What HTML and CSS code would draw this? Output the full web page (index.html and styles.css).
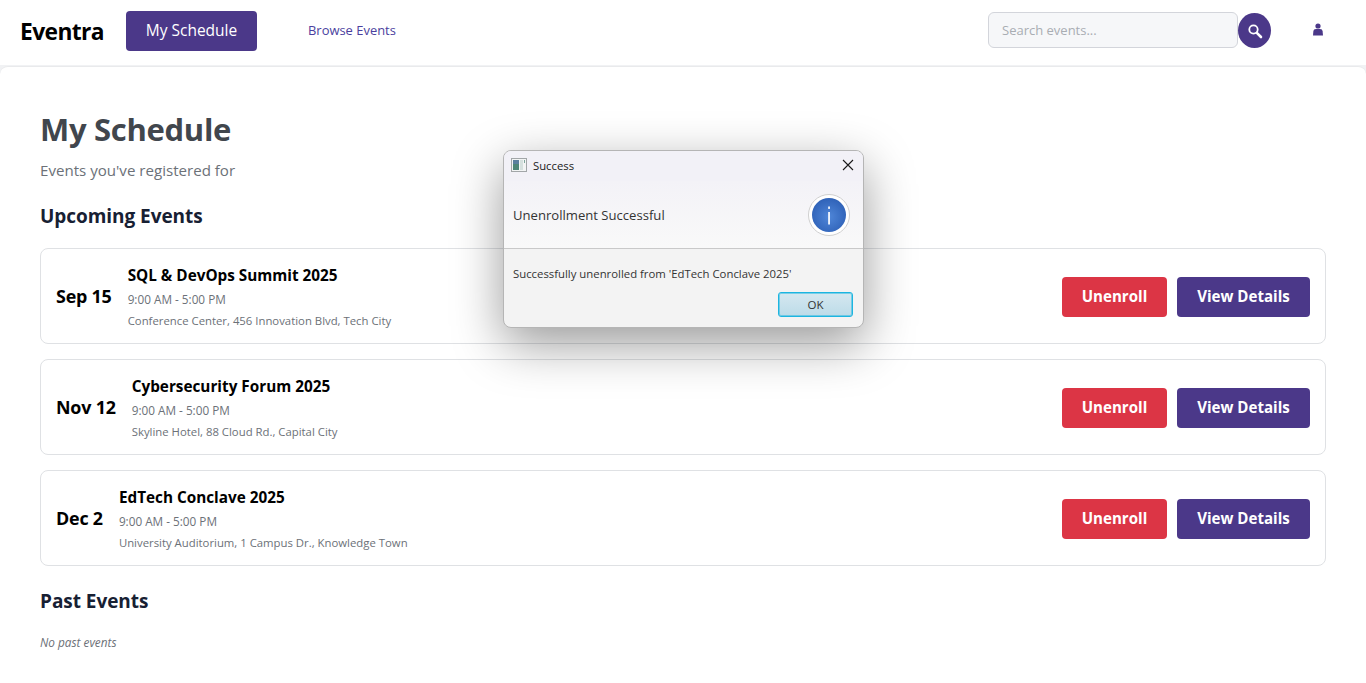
FILE: index.html
```html
<!DOCTYPE html>
<html lang="en">

<head>
    <meta charset="UTF-8">
    <title>Eventra - My Schedule</title>
    <link rel="stylesheet" href="styles.css">
</head>

<body>
    <header class="navbar">
        <span class="logo">Eventra</span>
        <a class="nav-active" href="#">My Schedule</a>
        <a class="nav-link" href="#">Browse Events</a>
        <div class="search">
            <div class="search-input">Search events...</div>
            <button class="search-btn" aria-label="Search">
                <svg width="16" height="16" viewBox="0 0 16 16">
                    <circle cx="6.5" cy="6.5" r="4.2" fill="none" stroke="#fff" stroke-width="1.8" />
                    <path d="M9.8 9.8 L14 14" stroke="#fff" stroke-width="2.6" stroke-linecap="round" />
                </svg>
            </button>
        </div>
        <div class="profile">
            <svg width="12" height="14" viewBox="0 0 12 14">
                <circle cx="6" cy="3" r="2.6" fill="#4b3889" />
                <path d="M1 12.5 L1.4 8 Q1.6 6 4 6 L8 6 Q10.4 6 10.6 8 L11 12.5 Z" fill="#4b3889" />
            </svg>
        </div>
    </header>

    <main class="content">
        <h1>My Schedule</h1>
        <p class="subtitle">Events you've registered for</p>

        <h2>Upcoming Events</h2>
        <div class="event-list">
            <div class="event-card">
                <span class="event-date">Sep 15</span>
                <div class="event-info">
                    <span class="event-title">SQL &amp; DevOps Summit 2025</span>
                    <span class="event-time">9:00 AM - 5:00 PM</span>
                    <span class="event-place">Conference Center, 456 Innovation Blvd, Tech City</span>
                </div>
                <div class="event-actions">
                    <a class="btn btn-red" href="#">Unenroll</a>
                    <a class="btn btn-purple" href="#">View Details</a>
                </div>
            </div>
            <div class="event-card">
                <span class="event-date">Nov 12</span>
                <div class="event-info">
                    <span class="event-title">Cybersecurity Forum 2025</span>
                    <span class="event-time">9:00 AM - 5:00 PM</span>
                    <span class="event-place">Skyline Hotel, 88 Cloud Rd., Capital City</span>
                </div>
                <div class="event-actions">
                    <a class="btn btn-red" href="#">Unenroll</a>
                    <a class="btn btn-purple" href="#">View Details</a>
                </div>
            </div>
            <div class="event-card">
                <span class="event-date">Dec 2</span>
                <div class="event-info">
                    <span class="event-title">EdTech Conclave 2025</span>
                    <span class="event-time">9:00 AM - 5:00 PM</span>
                    <span class="event-place">University Auditorium, 1 Campus Dr., Knowledge Town</span>
                </div>
                <div class="event-actions">
                    <a class="btn btn-red" href="#">Unenroll</a>
                    <a class="btn btn-purple" href="#">View Details</a>
                </div>
            </div>
        </div>

        <h2 class="past-title">Past Events</h2>
        <p class="no-events">No past events</p>
    </main>

    <div class="dialog">
        <div class="dialog-titlebar">
            <svg class="dialog-appicon" width="16" height="14" viewBox="0 0 16 14">
                <rect x="0.5" y="0.5" width="15" height="13" fill="#f2f4f4" stroke="#a2a6a8" />
                <rect x="2" y="2" width="6" height="10" fill="#4d8577" />
                <rect x="2" y="2" width="6" height="4" fill="#5a7f9e" />
                <rect x="9" y="2" width="3" height="10" fill="#d5e0de" />
                <rect x="13" y="2" width="1" height="3" fill="#7fa59b" />
            </svg>
            <span class="dialog-title">Success</span>
            <svg class="dialog-close" width="12" height="12" viewBox="0 0 12 12">
                <path d="M1 1 L11 11 M11 1 L1 11" stroke="#1a1a1a" stroke-width="1.1" />
            </svg>
        </div>
        <div class="dialog-header">
            <span>Unenrollment Successful</span>
            <div class="info-icon">
                <svg width="42" height="42" viewBox="0 0 42 42">
                    <defs>
                        <radialGradient id="infoFill" cx="50%" cy="55%" r="55%">
                            <stop offset="0%" stop-color="#4f86d8" />
                            <stop offset="100%" stop-color="#2f62b8" />
                        </radialGradient>
                    </defs>
                    <circle cx="21" cy="21" r="20.5" fill="#fff" stroke="#cfcfcf" />
                    <circle cx="21" cy="21" r="17" fill="url(#infoFill)" />
                    <rect x="20.2" y="18" width="1.7" height="12.5" fill="#fff" />
                    <rect x="20.2" y="12.5" width="1.7" height="2.4" fill="#fff" />
                </svg>
            </div>
        </div>
        <div class="dialog-body">
            <p>Successfully unenrolled from 'EdTech Conclave 2025'</p>
            <div class="dialog-buttons">
                <button class="dialog-ok">OK</button>
            </div>
        </div>
    </div>
</body>

</html>
```
FILE: styles.css
```css
* {
    box-sizing: border-box;
    margin: 0;
    padding: 0;
    font-family: "Open Sans", "Noto Sans", Arial, sans-serif;
}

body {
    width: 1366px;
    height: 683px;
    overflow: hidden;
    position: relative;
    background-color: #f1f2f4;
}

a {
    text-decoration: none;
}

.navbar {
    height: 65px;
    background-color: white;
    display: flex;
    align-items: center;
    padding: 0 20px 3px;
}

.logo {
    font-size: 22.8px;
    font-weight: 700;
    color: black;
    letter-spacing: -.6px;
    width: 106px;
}

.nav-active {
    width: 131px;
    height: 40px;
    line-height: 38px;
    text-align: center;
    background-color: #4b3889;
    color: white;
    border-radius: 4px;
    font-size: 15.5px;
}

.nav-link {
    margin-left: 51px;
    margin-top: -3px;
    color: #4b3f9e;
    font-size: 12.95px;
}

.search {
    margin-left: auto;
    margin-top: -2px;
    display: flex;
    align-items: center;
}

.search-input {
    width: 250px;
    height: 36px;
    line-height: 35px;
    padding-left: 13px;
    background-color: #f6f7f9;
    border: 1px solid #d3d5db;
    border-radius: 6px;
    color: #a9adb3;
    font-size: 13px;
}

.search-btn {
    width: 33px;
    height: 35px;
    margin-top: 1px;
    border: none;
    border-radius: 50%;
    background-color: #4b3889;
    display: flex;
    align-items: center;
    justify-content: center;
}

.profile {
    width: 12px;
    margin-left: 41px;
    margin-right: 22px;
    margin-top: -3px;
    display: flex;
}

.content {
    height: 618px;
    margin-top: 1px;
    padding: 40px 40px 0;
    background-color: white;
    border-radius: 8px 8px 0 0;
    border-top: 1px solid #e9eaec;
}

h1 {
    font-size: 31px;
    font-weight: 700;
    line-height: 44px;
    color: #41464d;
    letter-spacing: -.3px;
}

.subtitle {
    margin-top: 7px;
    font-size: 15.1px;
    line-height: 24px;
    color: #6c7178;
}

h2 {
    margin-top: 21px;
    font-size: 19px;
    font-weight: 700;
    line-height: 26px;
    color: #172033;
    letter-spacing: -.05px;
}

.event-list {
    margin-top: 19px;
    display: flex;
    flex-direction: column;
    gap: 15px;
}

.event-card {
    height: 96px;
    display: flex;
    align-items: center;
    gap: 16px;
    padding: 0 15px;
    border: 1px solid #dfe1e4;
    border-radius: 8px;
    background-color: white;
}

.event-date {
    font-size: 17.9px;
    font-weight: 700;
    color: black;
    letter-spacing: -.2px;
}

.event-info {
    display: flex;
    flex-direction: column;
    padding-top: 2px;
}

.event-title {
    font-size: 15.3px;
    font-weight: 700;
    line-height: 22px;
    color: black;
}

.event-time {
    margin-top: 3px;
    font-size: 11.75px;
    line-height: 20px;
    color: #6c7178;
}

.event-place {
    margin-top: 2px;
    font-size: 11.35px;
    line-height: 20px;
    color: #6c7178;
}

.event-actions {
    margin-left: auto;
    margin-top: 2px;
    display: flex;
    gap: 10px;
}

.btn {
    height: 40px;
    line-height: 39px;
    text-align: center;
    color: white;
    font-size: 15.1px;
    font-weight: 700;
    border-radius: 4px;
}

.btn-red {
    width: 105px;
    background-color: #dc3545;
}

.btn-purple {
    width: 133px;
    background-color: #4b3889;
}

.past-title {
    margin-top: 22px;
}

.no-events {
    margin-top: 20px;
    font-size: 11.8px;
    font-style: italic;
    color: #6c7178;
}

/* dialog sobre la pagina */
.dialog {
    position: absolute;
    left: 503px;
    top: 150px;
    width: 361px;
    height: 178px;
    display: flex;
    flex-direction: column;
    background-color: #f3f3f3;
    border: 1px solid #b5b5b5;
    border-radius: 8px;
    overflow: hidden;
    box-shadow: 0 16px 50px rgba(0, 0, 0, .4);
}

.dialog-titlebar {
    height: 30px;
    flex-shrink: 0;
    display: flex;
    align-items: center;
    padding: 0 9px 2px 7px;
    background-color: #f2f1f7;
}

.dialog-title {
    margin-left: 6px;
    font-size: 11.3px;
    color: #1a1a1a;
}

.dialog-close {
    margin-left: auto;
}

.dialog-header {
    height: 68px;
    flex-shrink: 0;
    display: flex;
    align-items: center;
    justify-content: space-between;
    padding: 0 13px 0 9px;
    background: linear-gradient(#f3f2f7, #f9f9f9);
    border-bottom: 1px solid #c9c9c9;
    font-size: 13.1px;
    color: #333;
}

.info-icon {
    display: flex;
}

.dialog-body {
    flex: 1;
    padding: 17px 10px 0 9px;
    font-size: 11.35px;
    color: #333;
}

.dialog-buttons {
    margin-top: 11px;
    display: flex;
    justify-content: flex-end;
}

.dialog-ok {
    width: 75px;
    height: 25px;
    font-size: 11.5px;
    color: #333;
    background: linear-gradient(#d5e8f0, #bcdbe8);
    border: 1px solid #1cb5e0;
    border-radius: 3px;
    box-shadow: inset 0 0 0 1px rgba(28, 181, 224, .5);
}
```
